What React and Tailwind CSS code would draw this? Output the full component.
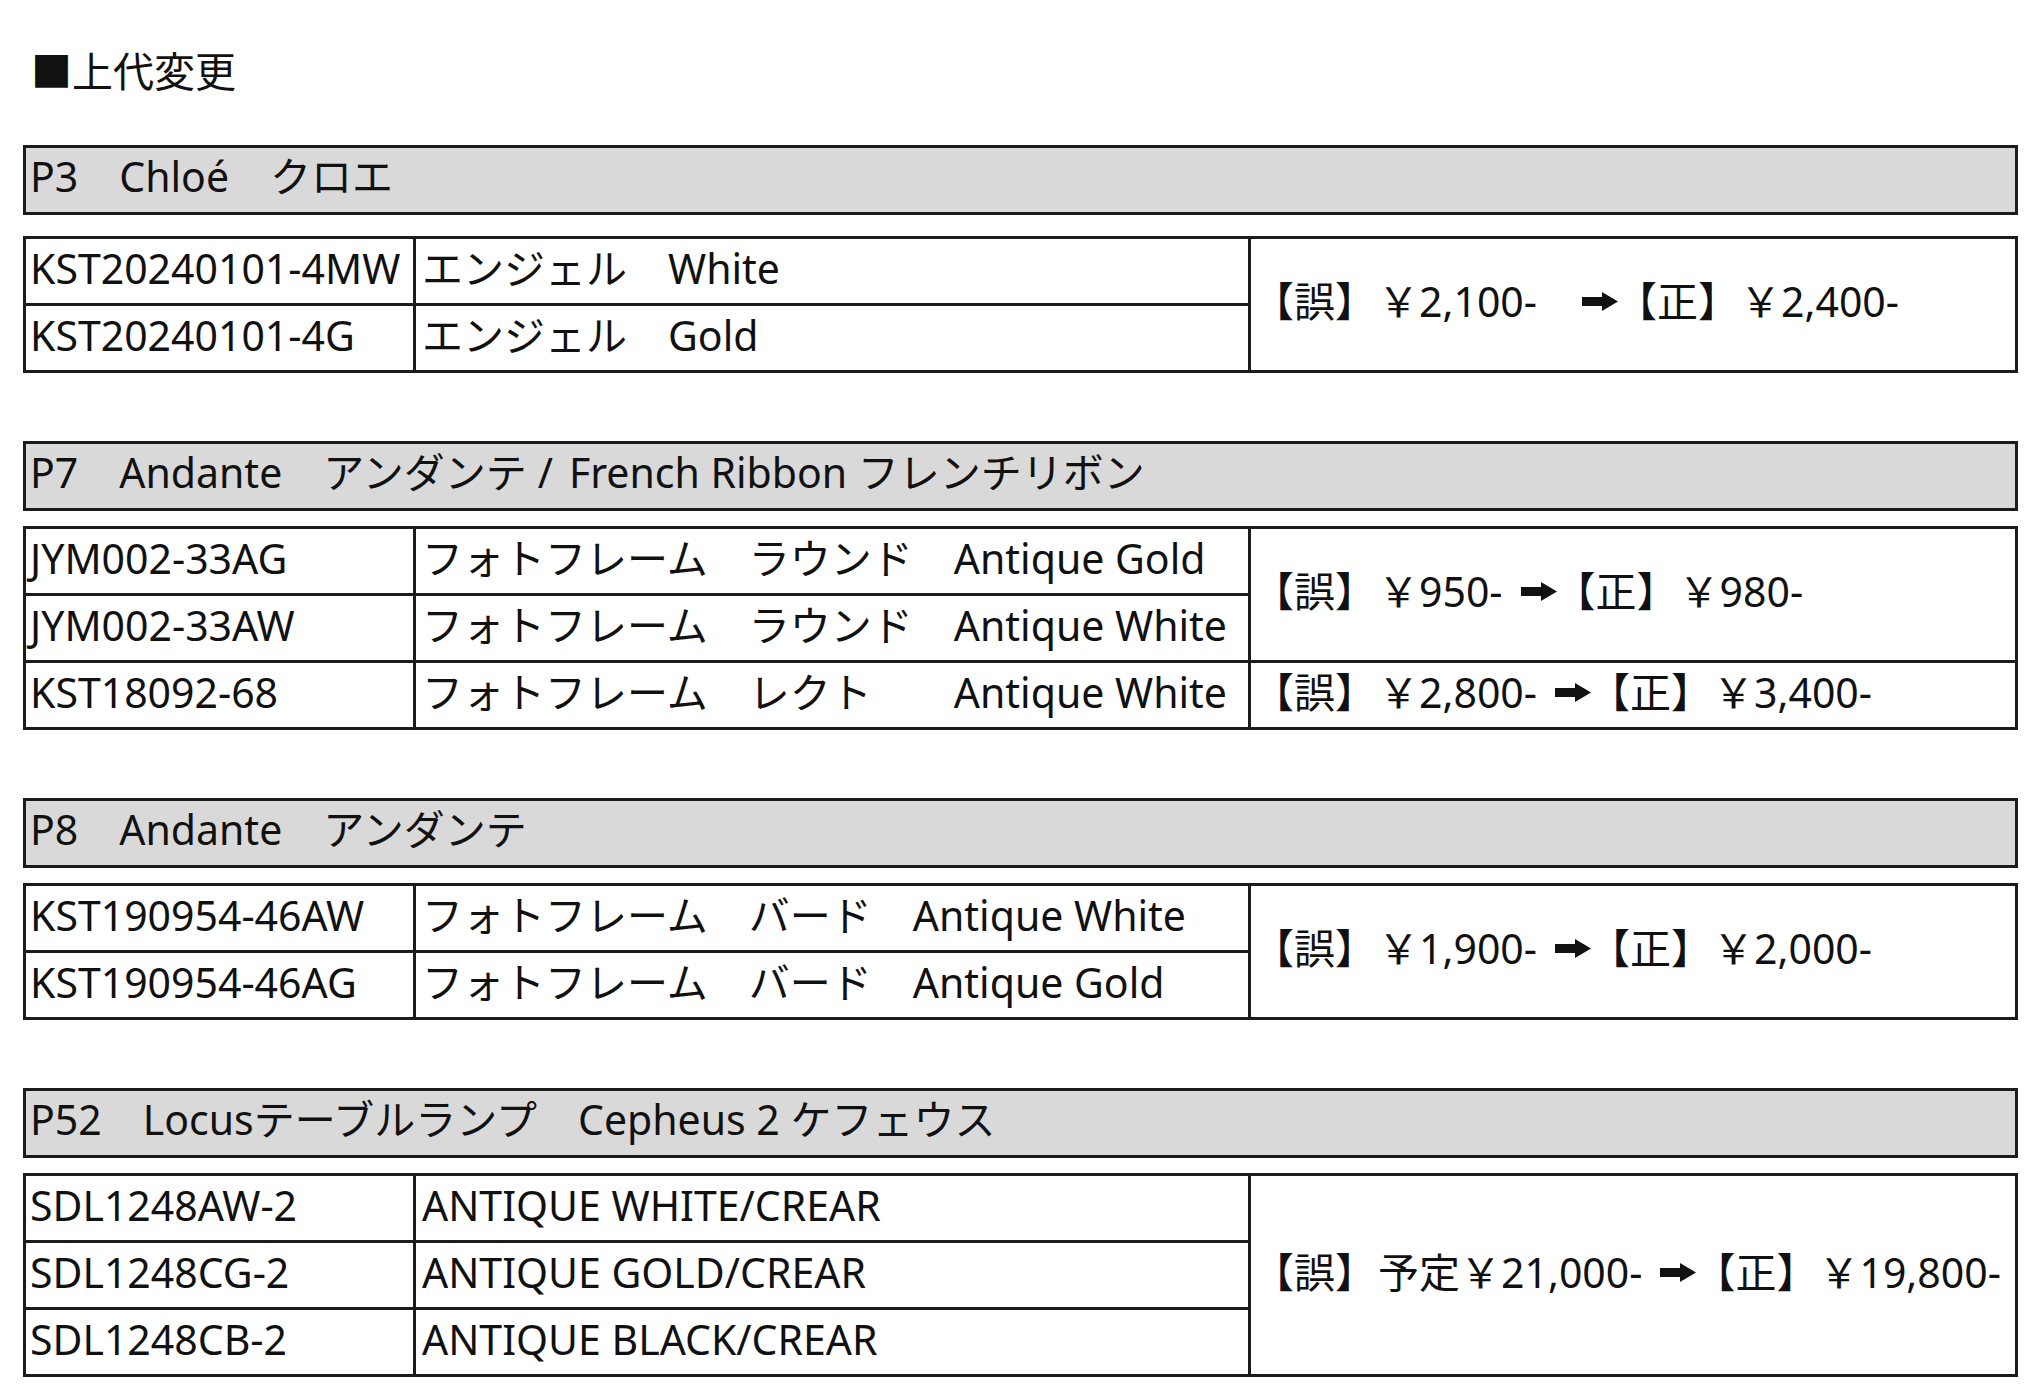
import React from "react";

const FONT = "font-['Noto_Sans','Noto_Sans_CJK_JP',sans-serif]";

function Arrow({ ml }) {
  return (
    <svg
      width="36"
      height="19"
      viewBox="0 0 36 19"
      className={`${ml} mr-[-2px] shrink-0`}
    >
      <path d="M0 5 H20 V0 L36 9.5 L20 19 V14 H0 Z" fill="#111" />
    </svg>
  );
}

function Price({ wrong, right, wide }) {
  return (
    <div className="flex items-center whitespace-pre leading-none pb-[6px] pl-[2px]">
      <span>【誤】</span>
      <span className="ml-[2px]">{wrong}</span>
      <Arrow ml={wide ? "ml-[45px]" : "ml-[18px]"} />
      <span>【正】</span>
      <span className="ml-[1px]">{right}</span>
    </div>
  );
}

function Header({ children }) {
  return (
    <div className="h-[70px] border-[3px] border-[#1c1c1c] bg-[#d9d9d9] flex items-center pl-[4px] pb-[8px] leading-none whitespace-pre">
      {children}
    </div>
  );
}

function Cell({ children, first }) {
  return (
    <div
      className={`bg-white h-[64px] flex items-center leading-none whitespace-pre pb-[6px] ${
        first ? "pl-[4px]" : "pl-[6px]"
      }`}
    >
      {children}
    </div>
  );
}

function Block({ title, rows, prices, gap }) {
  const cells = [];
  let rowIdx = 0;
  const priceAt = {};
  prices.forEach((p) => {
    priceAt[rowIdx] = p;
    rowIdx += p.span;
  });
  rows.forEach((r, i) => {
    cells.push(
      <Cell key={`a${i}`} first>
        {r[0]}
      </Cell>
    );
    cells.push(<Cell key={`b${i}`}>{r[1]}</Cell>);
    if (priceAt[i]) {
      const p = priceAt[i];
      cells.push(
        <div
          key={`p${i}`}
          className={`bg-white flex items-center ${
            p.span === 3 ? "row-span-3" : p.span === 2 ? "row-span-2" : ""
          }`}
        >
          <Price wrong={p.wrong} right={p.right} wide={p.wide} />
        </div>
      );
    }
  });
  return (
    <div>
      <Header>{title}</Header>
      <div
        className={`${gap} bg-[#1c1c1c] p-[3px] grid grid-cols-[387px_832px_1fr] gap-[3px]`}
      >
        {cells}
      </div>
    </div>
  );
}

export default function App() {
  return (
    <div
      className={`${FONT} w-[2044px] h-[1399px] bg-white text-[#111] text-[41px] pl-[23px] pr-[26px] overflow-hidden`}
    >
      <div className="h-[58px] leading-[58px] mt-[42px] mb-[45px] pl-[8px] whitespace-pre">
        ■上代変更
      </div>
      <div className="flex flex-col gap-[68px]">
        <Block
          gap="mt-[21px]"
          title="P3　Chloé　クロエ"
          rows={[
            ["KST20240101-4MW", "エンジェル　White"],
            ["KST20240101-4G", "エンジェル　Gold"],
          ]}
          prices={[{ span: 2, wrong: "￥2,100-", right: "￥2,400-", wide: true }]}
        />
        <Block
          gap="mt-[15px]"
          title={
            <>
              <span>P7　Andante　アンダンテ</span>
              <span className="ml-[11px]">/</span>
              <span className="ml-[16px]">French Ribbon フレンチリボン</span>
            </>
          }
          rows={[
            ["JYM002-33AG", "フォトフレーム　ラウンド　Antique Gold"],
            ["JYM002-33AW", "フォトフレーム　ラウンド　Antique White"],
            ["KST18092-68", "フォトフレーム　レクト　　Antique White"],
          ]}
          prices={[
            { span: 2, wrong: "￥950-", right: "￥980-" },
            { span: 1, wrong: "￥2,800-", right: "￥3,400-" },
          ]}
        />
        <Block
          gap="mt-[15px]"
          title="P8　Andante　アンダンテ"
          rows={[
            ["KST190954-46AW", "フォトフレーム　バード　Antique White"],
            ["KST190954-46AG", "フォトフレーム　バード　Antique Gold"],
          ]}
          prices={[{ span: 2, wrong: "￥1,900-", right: "￥2,000-" }]}
        />
        <Block
          gap="mt-[15px]"
          title="P52　Locusテーブルランプ　Cepheus 2 ケフェウス"
          rows={[
            ["SDL1248AW-2", "ANTIQUE WHITE/CREAR"],
            ["SDL1248CG-2", "ANTIQUE GOLD/CREAR"],
            ["SDL1248CB-2", "ANTIQUE BLACK/CREAR"],
          ]}
          prices={[{ span: 3, wrong: "予定￥21,000-", right: "￥19,800-" }]}
        />
      </div>
    </div>
  );
}
